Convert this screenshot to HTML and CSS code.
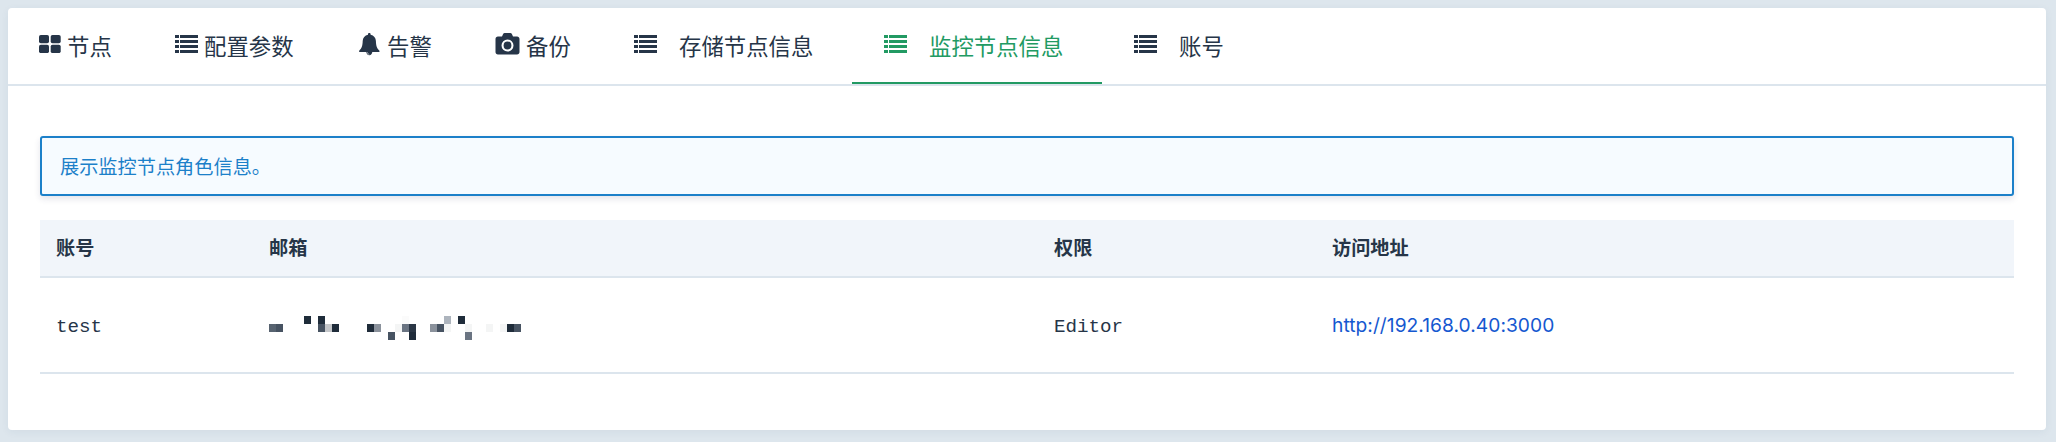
FILE: index.html
```html
<!DOCTYPE html>
<html lang="zh-CN">
<head>
<meta charset="utf-8">
<title>监控节点信息</title>
<link rel="stylesheet" href="styles.css">
</head>
<body>
<svg width="0" height="0" class="defs">
  <symbol id="list" viewBox="0 0 24 18">
    <path d="M0 0h4v3H0zM5 0h18v3H5zM0 5h4v3H0zM5 5h18v3H5zM0 10h4v3H0zM5 10h18v3H5zM0 15h4v3H0zM5 15h18v3H5z"/>
  </symbol>
</svg>
<main class="card">
  <nav class="tabs">
    <a class="tab tab-first"><svg class="icon" width="22" height="18" viewBox="0 0 22 18"><rect width="10" height="8.3" rx="1.8"/><rect x="11.7" width="10" height="8.3" rx="1.8"/><rect y="9.8" width="10" height="8.3" rx="1.8"/><rect x="11.7" y="9.8" width="10" height="8.3" rx="1.8"/></svg><span>节点</span></a>
    <a class="tab"><svg class="icon" width="24" height="18"><use href="#list"/></svg><span>配置参数</span></a>
    <a class="tab tab-bell"><svg class="icon" width="21" height="23" viewBox="0 0 21 23"><path d="M10.3 0c.8 0 1.300.5 1.300 1.300v.5c3.200.6 5.200 3.100 5.300 6.200.1 5 1.200 7.500 3.500 9.700.500.6.200 1.400-.6 1.400h-6.500c-.2 1.900-1.300 3.200-3 3.200s-2.800-1.300-3-3.200H.8c-.8 0-1.100-.8-.6-1.400 2.300-2.200 3.400-4.700 3.500-9.700.1-3.100 2.100-5.600 5.300-6.200v-.5C9 .5 9.500 0 10.300 0z"/><path d="M8.400 19.300c.1 1.200.8 2 1.900 2" fill="none" stroke="#fff" stroke-width=".6"/></svg><span>告警</span></a>
    <a class="tab tab-camera"><svg class="icon" width="25" height="22" viewBox="0 0 25 22"><path fill-rule="evenodd" d="M3 3.500h4l1-2.300C8.400.4 8.900 0 9.700 0h5.600c.8 0 1.300.4 1.700 1.200l1 2.300h4c1.500 0 2.500 1 2.500 2.500v13c0 1.500-1 2.500-2.500 2.500H3C1.500 21.500.5 20.500.5 19V6C.5 4.500 1.500 3.500 3 3.500zm9.500 3a6 6 0 1 0 0 12 6 6 0 0 0 0-12z"/><circle cx="12.500" cy="12.500" r="3.900"/></svg><span>备份</span></a>
    <a class="tab tab-wide"><svg class="icon" width="24" height="18"><use href="#list"/></svg><span>存储节点信息</span></a>
    <a class="tab tab-wide active"><svg class="icon" width="24" height="18"><use href="#list"/></svg><span>监控节点信息</span></a>
    <a class="tab tab-wide"><svg class="icon" width="24" height="18"><use href="#list"/></svg><span>账号</span></a>
  </nav>
  <section class="content">
    <div class="notice">展示监控节点角色信息。</div>
    <div class="row head"><div>账号</div><div>邮箱</div><div>权限</div><div>访问地址</div></div>
    <div class="row body">
      <div class="mono">test</div>
      <div><svg class="mask" width="252" height="24" viewBox="0 0 36 3" preserveAspectRatio="none" shape-rendering="crispEdges">
        <path fill="#1f2c3a" d="M5 0h1v1H5zM7 0h1v1H7zM27 0h1v1h-1zM9 1h1v1H9zM14 1h1v1h-1zM34 1h1v1h-1zM20 2h1v1h-1z"/>
        <path fill="#475362" d="M1 1h1v1H1zM7 1h1v1H7zM17 2h1v1h-1zM24 1h1v1h-1zM35 1h1v1h-1z"/>
        <path fill="#2a3645" d="M20 1h1v1h-1z"/>
        <path fill="#576370" d="M0 1h1v1H0z"/>
        <path fill="#6a7482" d="M19 1h1v1h-1zM28 2h1v1h-1z"/>
        <path fill="#8b929c" d="M15 1h1v1h-1zM23 1h1v1h-1z"/>
        <path fill="#adb4bd" d="M25 0h1v1h-1z"/>
        <path fill="#c5c7ca" d="M8 1h1v1H8z"/>
        <path fill="#f4f5f5" d="M18 1h1v1h-1zM25 1h1v1h-1zM28 1h1v1h-1zM31 1h1v1h-1zM33 1h1v1h-1z"/>
        <path fill="#fbfbfb" d="M19 0h1v1h-1z"/>
      </svg></div>
      <div class="mono">Editor</div>
      <div><a class="link">http://192.168.0.40:3000</a></div>
    </div>
  </section>
</main>
</body>
</html>
```
FILE: styles.css
```css
* { box-sizing: border-box; }
body {
  margin: 0;
  height: 442px;
  padding: 8px 10px 12px 8px;
  background: #dde6ed;
  color: #263548;
  font-family: Inter, "Noto Sans CJK SC", sans-serif;
  font-size: 19.2px;
}
.defs { display: block; height: 0; }
.card {
  height: 422px;
  background: #fff;
  border-radius: 4px;
  box-shadow: 0 2px 8px rgba(40, 60, 100, .06);
}
.tabs {
  display: flex;
  height: 78px;
  border-bottom: 2px solid #dce5ed;
}
.tab {
  display: flex;
  align-items: center;
  gap: 5px;
  height: 76px;
  padding: 0 32px;
  border-bottom: 2px solid transparent;
  font-family: "Noto Sans CJK SC", sans-serif;
  font-size: 22.4px;
  font-weight: 400;
  white-space: nowrap;
}
.tab span { margin-bottom: 1px; }
.tab-first { width: 135px; padding: 0 0 0 31px; gap: 6px; }
.tab:nth-child(2) { width: 184px; }
.tab-bell { width: 136px; gap: 7px; }
.tab-camera { width: 139px; gap: 6px; }
.tab-wide { width: 250px; gap: 21px; }
.icon { flex: none; fill: currentColor; margin-bottom: 2px; }
.active { color: #229a63; border-bottom-color: #229a63; }
.content { padding: 50px 32px 0; }
.notice {
  display: flex;
  align-items: center;
  height: 60px;
  margin-bottom: 24px;
  padding: 0 18px;
  border: 2px solid #1c80c9;
  border-radius: 3px;
  background: #f6fbff;
  color: #1c80c9;
  font-family: "Noto Sans CJK SC", sans-serif;
  font-weight: 400;
  box-shadow: 0 3px 6px rgba(40, 40, 90, .12);
}
.row {
  display: grid;
  grid-template-columns: 213px 785px 278px 1fr;
  align-items: center;
  padding-left: 16px;
  border-bottom: 2px solid #dce5ed;
}
.head {
  height: 58px;
  padding-bottom: 2px;
  background: #f1f5fa;
  font-family: "Noto Sans CJK SC", sans-serif;
  font-weight: 700;
}
.body { height: 96px; }
.mono { padding-top: 3px; font-family: "Liberation Mono", monospace; }
.mask { display: block; margin-top: 5px; }
.link { color: #1558d0; letter-spacing: .04px; }
```
